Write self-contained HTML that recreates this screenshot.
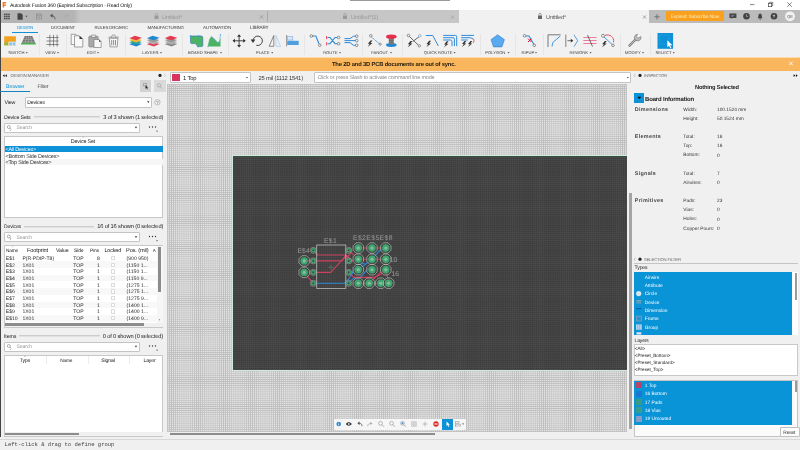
<!DOCTYPE html>
<html lang="en"><head><meta charset="utf-8"><title>Autodesk Fusion 360</title><style>
html,body{margin:0;padding:0}
body{width:800px;height:450px;overflow:hidden;position:relative;background:#f0f0f0;font-family:"Liberation Sans",sans-serif}
#app{position:absolute;left:0;top:0;width:800px;height:450px;overflow:hidden;will-change:transform}
#app>div,#app>svg{position:absolute}
#app>svg{left:0;top:0;pointer-events:none}
.t{white-space:nowrap;line-height:1;text-rendering:geometricPrecision}
.b{font-weight:700}
.m{font-family:"Liberation Mono",monospace}
</style></head><body><div id="app">
<div style="left:0px;top:0px;width:800px;height:10px;background:#ffffff;"></div>
<div style="left:350px;top:0px;width:100px;height:0.9px;background:#9a9a9a;"></div>
<svg width="800" height="450" viewBox="0 0 800 450"><path d="M2.6 2h3.6v1.5h-2v1h1.7v1.4h-1.7v1.6h-1.6z" fill="#f47b20"/></svg>
<div class="t" style="left:10.00px;top:4px;font-size:5.15px;color:#111;letter-spacing:-0.137px;">Autodesk Fusion 360 (Expired Subscription - Read Only)</div>
<svg width="800" height="450" viewBox="0 0 800 450"><g stroke="#333" stroke-width="0.6" fill="none"><path d="M750 4.600h4.400"/><rect x="768.300" y="3.300" width="3.400" height="3.400"/><path d="M769.300 3.300v-1h3.400v3.400h-1"/><path d="M787.300 2.300l4.500 4.500M791.800 2.300l-4.500 4.500"/></g></svg>
<div style="left:0px;top:10px;width:800px;height:12.6px;background:#c6c6c6;"></div>
<div style="left:0px;top:10px;width:80px;height:12.6px;background:linear-gradient(90deg,#b4b4b4,#b4b4b4 92%,#c6c6c6);"></div>
<div style="left:649px;top:10px;width:151px;height:12.6px;background:#bbbbbb;"></div>
<div style="left:459px;top:10.4px;width:190px;height:12.3px;background:#f1f1f1;"></div>
<div style="left:267px;top:11px;width:0.6px;height:11px;background:#aaa;"></div>
<div class="t" style="left:162.00px;top:16px;font-size:5.61px;color:#9a9a9a;letter-spacing:-0.134px;">Untitled*</div>
<div class="t" style="left:351.00px;top:16px;font-size:5.72px;color:#9a9a9a;letter-spacing:-0.134px;">Untitled*(1)</div>
<div class="t" style="left:546.00px;top:16px;font-size:5.61px;color:#555;letter-spacing:-0.134px;">Untitled*</div>
<svg width="800" height="450" viewBox="0 0 800 450"><rect x="154.5" y="15.6" width="4" height="3.4" rx="0.5" fill="#9a9a9a"/><path d="M155.4 15.6v-1.2a1.1 1.1 0 0 1 2.2 0v1.2" stroke="#9a9a9a" stroke-width="0.6" fill="none"/><rect x="343" y="15.6" width="4" height="3.4" rx="0.5" fill="#9a9a9a"/><path d="M343.9 15.6v-1.2a1.1 1.1 0 0 1 2.2 0v1.2" stroke="#9a9a9a" stroke-width="0.6" fill="none"/><rect x="538" y="15.6" width="4" height="3.4" rx="0.5" fill="#666"/><path d="M538.9 15.6v-1.2a1.1 1.1 0 0 1 2.2 0v1.2" stroke="#666" stroke-width="0.6" fill="none"/></svg>
<svg width="800" height="450" viewBox="0 0 800 450"><path d="M259.9 15.4l3.2 3.2M263.1 15.4l-3.2 3.2" stroke="#8a8a8a" stroke-width="0.6" fill="none"/><path d="M450.9 15.4l3.2 3.2M454.1 15.4l-3.2 3.2" stroke="#999" stroke-width="0.6" fill="none"/><path d="M642.9 15.4l3.2 3.2M646.1 15.4l-3.2 3.2" stroke="#777" stroke-width="0.6" fill="none"/></svg>
<svg width="800" height="450" viewBox="0 0 800 450"><path d="M654.300 16.800h5.400M657 14.100v5.400" stroke="#6e6e6e" stroke-width="0.9"/></svg>
<svg width="800" height="450" viewBox="0 0 800 450"><g fill="#444"><rect x="4.0" y="13.6" width="1.5" height="1.5"/><rect x="4.0" y="15.7" width="1.5" height="1.5"/><rect x="4.0" y="17.8" width="1.5" height="1.5"/><rect x="6.1" y="13.6" width="1.5" height="1.5"/><rect x="6.1" y="15.7" width="1.5" height="1.5"/><rect x="6.1" y="17.8" width="1.5" height="1.5"/><rect x="8.2" y="13.6" width="1.5" height="1.5"/><rect x="8.2" y="15.7" width="1.5" height="1.5"/><rect x="8.2" y="17.8" width="1.5" height="1.5"/><path d="M17.5 13.2h3.6l1.6 1.6v5h-5.2z"/><path d="M25.3 15.8h2.2l-1.1 1.4z"/></g><g fill="none" stroke="#8a8a8a" stroke-width="0.7"><rect x="36.5" y="14" width="5" height="5"/><path d="M36.5 15.8h5M38 17.2h2"/></g><path d="M55 19.3c0-2.6-1.2-3.6-3.6-3.6" stroke="#555" stroke-width="0.9" fill="none"/><path d="M52.6 13.6l-2.6 2.1 2.6 2.1z" fill="#555"/><path d="M63.5 17.8c.6-1.7 2-2.4 3.8-2.3" stroke="#aaa" stroke-width="0.9" fill="none"/><path d="M66.8 13.9l2.3 1.7-2.3 1.7z" fill="#aaa"/></svg>
<div style="left:666px;top:11.2px;width:58px;height:10px;background:#f9a11f;border-radius:1px"></div>
<div class="t" style="left:671.00px;top:16px;font-size:4.77px;color:#ffedb8;letter-spacing:-0.132px;">Expired: Subscribe Now</div>
<svg width="800" height="450" viewBox="0 0 800 450"><g fill="#444"><path d="M729.400 13.600h7v4.300h-3.800l-1.200 1.200v-1.200h-2z"/><circle cx="746.500" cy="16.200" r="3.300"/><path d="M757.6 18.3c.9-.8.7-2 .9-3 .2-1.2.8-1.9 1.6-1.9s1.4.7 1.6 1.900c.2 1 0 2.200.9 3z"/><circle cx="760.1" cy="19" r="0.7"/><circle cx="774" cy="16.200" r="3.300"/></g><path d="M746.5 14.400v2h1.500" stroke="#ccc" stroke-width="0.6" fill="none"/><path d="M731.200 15.500h3.200M731.200 16.600h2" stroke="#ccc" stroke-width="0.4"/><circle cx="790" cy="16.300" r="4.900" fill="#f2f2f2"/></svg>
<div class="t b" style="left:772.60px;top:15px;font-size:4.6px;color:#ddd;">?</div>
<div class="t" style="left:787.04px;top:15px;font-size:4.1px;color:#444;">QE</div>
<div style="left:0px;top:22.6px;width:800px;height:34px;background:#f1f1f1;"></div>
<div class="t" style="left:17.00px;top:26px;font-size:4.42px;color:#0d92d8;letter-spacing:-0.158px;">DESIGN</div>
<div class="t" style="left:51.00px;top:26px;font-size:4.4px;color:#3a3a3a;letter-spacing:-0.178px;">DOCUMENT</div>
<div class="t" style="left:94.50px;top:26px;font-size:4.35px;color:#3a3a3a;letter-spacing:-0.156px;">RULES DRC/ERC</div>
<div class="t" style="left:147.50px;top:26px;font-size:4.43px;color:#3a3a3a;letter-spacing:-0.165px;">MANUFACTURING</div>
<div class="t" style="left:203.00px;top:26px;font-size:4.52px;color:#3a3a3a;letter-spacing:-0.172px;">AUTOMATION</div>
<div class="t" style="left:250.00px;top:26px;font-size:4.6px;color:#3a3a3a;letter-spacing:-0.157px;">LIBRARY</div>
<div style="left:12px;top:32px;width:25.5px;height:0.8px;background:#0d92d8;"></div>
<div class="t" style="left:8.22px;top:51px;font-size:4.15px;color:#3c3c3c;">SWITCH</div>
<svg width="800" height="450" viewBox="0 0 800 450"><path d="M25.75 52.2h2l-1 1.3z" fill="#333"/></svg>
<div class="t" style="left:45.20px;top:51px;font-size:4.15px;color:#3c3c3c;">VIEW</div>
<svg width="800" height="450" viewBox="0 0 800 450"><path d="M57.00 52.2h2l-1 1.3z" fill="#333"/></svg>
<div class="t" style="left:86.87px;top:51px;font-size:4.15px;color:#3c3c3c;">EDIT</div>
<svg width="800" height="450" viewBox="0 0 800 450"><path d="M97.00 52.2h2l-1 1.3z" fill="#333"/></svg>
<div class="t" style="left:142.37px;top:51px;font-size:4.15px;color:#3c3c3c;">LAYERS</div>
<svg width="800" height="450" viewBox="0 0 800 450"><path d="M160.00 52.2h2l-1 1.3z" fill="#333"/></svg>
<div class="t" style="left:188.01px;top:51px;font-size:4.15px;color:#3c3c3c;">BOARD SHAPE</div>
<svg width="800" height="450" viewBox="0 0 800 450"><path d="M220.00 52.2h2l-1 1.3z" fill="#333"/></svg>
<div class="t" style="left:256.00px;top:51px;font-size:4.15px;color:#3c3c3c;">PLACE</div>
<svg width="800" height="450" viewBox="0 0 800 450"><path d="M271.20 52.2h2l-1 1.3z" fill="#333"/></svg>
<div class="t" style="left:323.14px;top:51px;font-size:4.15px;color:#3c3c3c;">ROUTE</div>
<svg width="800" height="450" viewBox="0 0 800 450"><path d="M339.00 52.2h2l-1 1.3z" fill="#333"/></svg>
<div class="t" style="left:371.18px;top:51px;font-size:4.15px;color:#3c3c3c;">FANOUT</div>
<svg width="800" height="450" viewBox="0 0 800 450"><path d="M390.00 52.2h2l-1 1.3z" fill="#333"/></svg>
<div class="t" style="left:423.79px;top:51px;font-size:4.15px;color:#3c3c3c;">QUICK ROUTE</div>
<svg width="800" height="450" viewBox="0 0 800 450"><path d="M453.60 52.2h2l-1 1.3z" fill="#333"/></svg>
<div class="t" style="left:485.19px;top:51px;font-size:4.15px;color:#3c3c3c;">POLYGON</div>
<svg width="800" height="450" viewBox="0 0 800 450"><path d="M507.50 52.2h2l-1 1.3z" fill="#333"/></svg>
<div class="t" style="left:521.56px;top:51px;font-size:4.15px;color:#3c3c3c;">RIPUP</div>
<svg width="800" height="450" viewBox="0 0 800 450"><path d="M535.00 52.2h2l-1 1.3z" fill="#333"/></svg>
<div class="t" style="left:569.41px;top:51px;font-size:4.15px;color:#3c3c3c;">REWORK</div>
<svg width="800" height="450" viewBox="0 0 800 450"><path d="M589.60 52.2h2l-1 1.3z" fill="#333"/></svg>
<div class="t" style="left:624.73px;top:51px;font-size:4.15px;color:#3c3c3c;">MODIFY</div>
<svg width="800" height="450" viewBox="0 0 800 450"><path d="M642.00 52.2h2l-1 1.3z" fill="#333"/></svg>
<div class="t" style="left:655.53px;top:51px;font-size:4.15px;color:#3c3c3c;">SELECT</div>
<svg width="800" height="450" viewBox="0 0 800 450"><path d="M672.75 52.2h2l-1 1.3z" fill="#333"/></svg>
<div style="left:38.5px;top:34px;width:0.5px;height:21px;background:#e6e6e6;"></div>
<div style="left:66px;top:34px;width:0.5px;height:21px;background:#e6e6e6;"></div>
<div style="left:124.5px;top:34px;width:0.5px;height:21px;background:#e6e6e6;"></div>
<div style="left:182px;top:34px;width:0.5px;height:21px;background:#e6e6e6;"></div>
<div style="left:227.5px;top:34px;width:0.5px;height:21px;background:#e6e6e6;"></div>
<div style="left:304px;top:34px;width:0.5px;height:21px;background:#e6e6e6;"></div>
<div style="left:362px;top:34px;width:0.5px;height:21px;background:#e6e6e6;"></div>
<div style="left:402px;top:34px;width:0.5px;height:21px;background:#e6e6e6;"></div>
<div style="left:479.5px;top:34px;width:0.5px;height:21px;background:#e6e6e6;"></div>
<div style="left:515px;top:34px;width:0.5px;height:21px;background:#e6e6e6;"></div>
<div style="left:542.5px;top:34px;width:0.5px;height:21px;background:#e6e6e6;"></div>
<div style="left:619.5px;top:34px;width:0.5px;height:21px;background:#e6e6e6;"></div>
<div style="left:650px;top:34px;width:0.5px;height:21px;background:#e6e6e6;"></div>
<div style="left:0px;top:56.5px;width:800px;height:14px;background:#fab65c;"></div>
<div style="left:0px;top:56.5px;width:800px;height:0.8px;background:#fcd9a8;"></div>
<div class="t b" style="left:332.00px;top:63px;font-size:5.81px;color:#2a2010;letter-spacing:-0.168px;">The 2D and 3D PCB documents are out of sync.</div>
<svg width="800" height="450" viewBox="0 0 800 450"><path d="M789.3 61.699999999999996l3.4 3.4M792.7 61.699999999999996l-3.4 3.4" stroke="#fff" stroke-width="0.9" fill="none"/></svg>
<div style="left:0px;top:70.5px;width:167px;height:380px;background:#f0f0f0;"></div>
<div style="left:0px;top:0px;width:1.1px;height:450px;background:#444;"></div>
<div class="t" style="left:10.50px;top:74px;font-size:4.45px;color:#666;letter-spacing:-0.164px;">DESIGN MANAGER</div>
<svg width="800" height="450" viewBox="0 0 800 450"><path d="M4.600 74.300l-1.800 1.400 1.800 1.400zM6.900 74.300l-1.800 1.400 1.800 1.400z" fill="#111"/><circle cx="160" cy="75.400" r="1.600" fill="#222"/><path d="M164.300 73.700l1 1.700-1 1.700" stroke="#aaa" stroke-width="0.5" fill="none"/></svg>
<div class="t" style="left:6.00px;top:85px;font-size:5.34px;color:#0d92d8;letter-spacing:-0.155px;">Browser</div>
<div class="t" style="left:37.50px;top:85px;font-size:5.15px;color:#444;letter-spacing:-0.107px;">Filter</div>
<div style="left:0px;top:90.6px;width:30px;height:1.1px;background:#1583c4;"></div>
<div style="left:139.5px;top:80px;width:11.8px;height:12px;background:#d2d2d2;"></div>
<div style="left:154px;top:80px;width:11.5px;height:12px;background:#dadada;"></div>
<svg width="800" height="450" viewBox="0 0 800 450"><path d="M143.500 83.500h3v2.500h-3z" fill="none" stroke="#666" stroke-width="0.4"/><path d="M145.500 85.200l0 3.600.9-.9.700 1.500.6-.3-.7-1.400h1.200z" fill="#222"/><circle cx="159" cy="85.300" r="1.700" fill="none" stroke="#999" stroke-width="0.6"/><path d="M160.200 86.600l1.800 1.900" stroke="#999" stroke-width="0.7"/></svg>
<div class="t" style="left:4.50px;top:101px;font-size:5.32px;color:#222;letter-spacing:-0.159px;">View</div>
<div style="left:25px;top:97px;width:127px;height:10.5px;background:#fff;box-sizing:border-box;border:0.6px solid #c4c4c4;border-radius:1px"></div>
<div class="t" style="left:27.20px;top:101px;font-size:5.22px;color:#222;letter-spacing:-0.152px;">Devices</div>
<svg width="800" height="450" viewBox="0 0 800 450"><path d="M147.100 101.300h2.400l-1.200 1.600z" fill="#333"/><circle cx="157.400" cy="102.200" r="2.700" fill="none" stroke="#888" stroke-width="0.5"/></svg>
<div class="t" style="left:156.23px;top:101px;font-size:4.2px;color:#666;">?</div>
<div class="t" style="left:4.00px;top:116px;font-size:5.27px;color:#222;letter-spacing:-0.147px;">Device Sets</div>
<div class="t" style="left:103.20px;top:116px;font-size:5.69px;color:#222;letter-spacing:-0.143px;">3 of 3 shown (1 selected)</div>
<div style="left:34px;top:116.4px;width:66px;height:2px;background:#e2e2e2;box-sizing:border-box;border-top:0.5px solid #cdcdcd"></div>
<div style="left:4px;top:122.5px;width:135.5px;height:10px;background:#fff;box-sizing:border-box;border:0.6px solid #c4c4c4;border-radius:1px"></div>
<svg width="800" height="450" viewBox="0 0 800 450"><circle cx="8.800" cy="127.0" r="1.500" fill="none" stroke="#666" stroke-width="0.500"/><path d="M9.900 128.1l1.400 1.400" stroke="#666" stroke-width="0.600"/><path d="M9.600 129.9h1.400l-.7.900z" fill="#666"/><path d="M134.800 126.8h2.400l-1.200 1.600z" fill="#333"/><circle cx="149.5" cy="127.0" r="0.650" fill="#333"/><circle cx="152.5" cy="127.0" r="0.650" fill="#333"/><circle cx="155.5" cy="127.0" r="0.650" fill="#333"/><path d="M156.200 130.8h1.700l-.85 1.100z" fill="#333"/></svg>
<div class="t" style="left:16.50px;top:126px;font-size:5.18px;color:#9a9a9a;letter-spacing:-0.152px;">Search</div>
<div style="left:4px;top:135.5px;width:159.2px;height:82.5px;background:#fff;box-sizing:border-box;border:0.6px solid #c8c8c8"></div>
<div class="t" style="left:70.75px;top:140px;font-size:5.37px;color:#222;letter-spacing:-0.147px;">Device Set</div>
<svg width="800" height="450" viewBox="0 0 800 450"><path d="M82 137.600l1-0.800 1 .8" stroke="#888" stroke-width="0.4" fill="none"/></svg>
<div style="left:4.6px;top:146px;width:158px;height:6.3px;background:#0d92d8;"></div>
<div class="t" style="left:5.50px;top:148px;font-size:5.29px;color:#fff;letter-spacing:-0.142px;">&lt;All Devices&gt;</div>
<div class="t" style="left:5.50px;top:155px;font-size:5.48px;color:#333;letter-spacing:-0.156px;">&lt;Bottom Side Devices&gt;</div>
<div style="left:4.6px;top:159.2px;width:158px;height:6.3px;background:#f6f6f6;"></div>
<div class="t" style="left:5.50px;top:161px;font-size:5.48px;color:#333;letter-spacing:-0.152px;">&lt;Top Side Devices&gt;</div>
<div class="t" style="left:4.00px;top:225px;font-size:5.07px;color:#222;letter-spacing:-0.148px;">Devices</div>
<div class="t" style="left:97.20px;top:225px;font-size:5.69px;color:#222;letter-spacing:-0.145px;">16 of 16 shown (0 selected)</div>
<div style="left:24px;top:225.5px;width:70px;height:2px;background:#e2e2e2;box-sizing:border-box;border-top:0.5px solid #cdcdcd"></div>
<div style="left:4px;top:232px;width:135.5px;height:10px;background:#fff;box-sizing:border-box;border:0.6px solid #c4c4c4;border-radius:1px"></div>
<svg width="800" height="450" viewBox="0 0 800 450"><circle cx="8.800" cy="236.5" r="1.500" fill="none" stroke="#666" stroke-width="0.500"/><path d="M9.900 237.6l1.400 1.400" stroke="#666" stroke-width="0.600"/><path d="M9.600 239.4h1.400l-.7.900z" fill="#666"/><path d="M134.800 236.3h2.400l-1.200 1.600z" fill="#333"/><circle cx="149.5" cy="236.5" r="0.650" fill="#333"/><circle cx="152.5" cy="236.5" r="0.650" fill="#333"/><circle cx="155.5" cy="236.5" r="0.650" fill="#333"/><path d="M156.200 240.3h1.700l-.85 1.100z" fill="#333"/></svg>
<div class="t" style="left:16.50px;top:236px;font-size:5.18px;color:#9a9a9a;letter-spacing:-0.152px;">Search</div>
<div style="left:4px;top:245px;width:159.2px;height:82.5px;background:#fff;box-sizing:border-box;border:0.6px solid #c8c8c8"></div>
<svg width="800" height="450" viewBox="0 0 800 450"><path d="M11.500 246.800l1-0.800 1 .8" stroke="#888" stroke-width="0.4" fill="none"/></svg>
<div class="t" style="left:6.00px;top:250px;font-size:4.77px;color:#222;letter-spacing:-0.181px;">Name</div>
<div class="t" style="left:27.00px;top:249px;font-size:5.64px;color:#222;letter-spacing:-0.140px;">Footprint</div>
<div class="t" style="left:56.00px;top:249px;font-size:5.33px;color:#222;letter-spacing:-0.147px;">Value</div>
<div class="t" style="left:74.00px;top:249px;font-size:5.04px;color:#222;letter-spacing:-0.147px;">Side</div>
<div class="t" style="left:90.00px;top:250px;font-size:4.91px;color:#222;letter-spacing:-0.138px;">Pins</div>
<div class="t" style="left:104.50px;top:249px;font-size:5.43px;color:#222;letter-spacing:-0.168px;">Locked</div>
<div class="t" style="left:126.00px;top:249px;font-size:5.65px;color:#222;letter-spacing:-0.136px;">Pos. (mil)</div>
<div class="t" style="left:152.80px;top:249px;font-size:4.5px;color:#222;">A</div>
<div class="t" style="left:5.80px;top:257px;font-size:5.1px;color:#2a2a2a;">E$1</div>
<div class="t" style="left:22.40px;top:257px;font-size:5.1px;color:#2a2a2a;">P(R-PDIP-T8)</div>
<div class="t" style="left:73.20px;top:257px;font-size:5.1px;color:#2a2a2a;">TOP</div>
<div class="t" style="left:96.96px;top:257px;font-size:5.1px;color:#2a2a2a;">8</div>
<div style="left:111px;top:255.8px;width:4.4px;height:4.4px;background:#fdfdfd;box-sizing:border-box;border:0.4px solid #dcdcdc;border-radius:0.6px"></div>
<div class="t" style="left:126.60px;top:257px;font-size:5.1px;color:#2a2a2a;">(900 950)</div>
<div style="left:4.6px;top:261.4px;width:152px;height:6.6px;background:#f8f8f8;"></div>
<div class="t" style="left:5.80px;top:264px;font-size:5.1px;color:#2a2a2a;">E$2</div>
<div class="t" style="left:22.40px;top:264px;font-size:5.1px;color:#2a2a2a;">1X01</div>
<div class="t" style="left:73.20px;top:264px;font-size:5.1px;color:#2a2a2a;">TOP</div>
<div class="t" style="left:96.96px;top:264px;font-size:5.1px;color:#2a2a2a;">1</div>
<div style="left:111px;top:262.5px;width:4.4px;height:4.4px;background:#fdfdfd;box-sizing:border-box;border:0.4px solid #dcdcdc;border-radius:0.6px"></div>
<div class="t" style="left:126.60px;top:264px;font-size:5.1px;color:#2a2a2a;">(1150 1...</div>
<div class="t" style="left:5.80px;top:270px;font-size:5.1px;color:#2a2a2a;">E$3</div>
<div class="t" style="left:22.40px;top:270px;font-size:5.1px;color:#2a2a2a;">1X01</div>
<div class="t" style="left:73.20px;top:270px;font-size:5.1px;color:#2a2a2a;">TOP</div>
<div class="t" style="left:96.96px;top:270px;font-size:5.1px;color:#2a2a2a;">1</div>
<div style="left:111px;top:269.2px;width:4.4px;height:4.4px;background:#fdfdfd;box-sizing:border-box;border:0.4px solid #dcdcdc;border-radius:0.6px"></div>
<div class="t" style="left:126.60px;top:270px;font-size:5.1px;color:#2a2a2a;">(1150 1...</div>
<div style="left:4.6px;top:274.8px;width:152px;height:6.6px;background:#f8f8f8;"></div>
<div class="t" style="left:5.80px;top:277px;font-size:5.1px;color:#2a2a2a;">E$4</div>
<div class="t" style="left:22.40px;top:277px;font-size:5.1px;color:#2a2a2a;">1X01</div>
<div class="t" style="left:73.20px;top:277px;font-size:5.1px;color:#2a2a2a;">TOP</div>
<div class="t" style="left:96.96px;top:277px;font-size:5.1px;color:#2a2a2a;">1</div>
<div style="left:111px;top:275.9px;width:4.4px;height:4.4px;background:#fdfdfd;box-sizing:border-box;border:0.4px solid #dcdcdc;border-radius:0.6px"></div>
<div class="t" style="left:126.60px;top:277px;font-size:5.1px;color:#2a2a2a;">(1150 9...</div>
<div class="t" style="left:5.80px;top:284px;font-size:5.1px;color:#2a2a2a;">E$5</div>
<div class="t" style="left:22.40px;top:284px;font-size:5.1px;color:#2a2a2a;">1X01</div>
<div class="t" style="left:73.20px;top:284px;font-size:5.1px;color:#2a2a2a;">TOP</div>
<div class="t" style="left:96.96px;top:284px;font-size:5.1px;color:#2a2a2a;">1</div>
<div style="left:111px;top:282.6px;width:4.4px;height:4.4px;background:#fdfdfd;box-sizing:border-box;border:0.4px solid #dcdcdc;border-radius:0.6px"></div>
<div class="t" style="left:126.60px;top:284px;font-size:5.1px;color:#2a2a2a;">(1275 1...</div>
<div style="left:4.6px;top:288.2px;width:152px;height:6.6px;background:#f8f8f8;"></div>
<div class="t" style="left:5.80px;top:290px;font-size:5.1px;color:#2a2a2a;">E$6</div>
<div class="t" style="left:22.40px;top:290px;font-size:5.1px;color:#2a2a2a;">1X01</div>
<div class="t" style="left:73.20px;top:290px;font-size:5.1px;color:#2a2a2a;">TOP</div>
<div class="t" style="left:96.96px;top:290px;font-size:5.1px;color:#2a2a2a;">1</div>
<div style="left:111px;top:289.3px;width:4.4px;height:4.4px;background:#fdfdfd;box-sizing:border-box;border:0.4px solid #dcdcdc;border-radius:0.6px"></div>
<div class="t" style="left:126.60px;top:290px;font-size:5.1px;color:#2a2a2a;">(1275 1...</div>
<div class="t" style="left:5.80px;top:297px;font-size:5.1px;color:#2a2a2a;">E$7</div>
<div class="t" style="left:22.40px;top:297px;font-size:5.1px;color:#2a2a2a;">1X01</div>
<div class="t" style="left:73.20px;top:297px;font-size:5.1px;color:#2a2a2a;">TOP</div>
<div class="t" style="left:96.96px;top:297px;font-size:5.1px;color:#2a2a2a;">1</div>
<div style="left:111px;top:296px;width:4.4px;height:4.4px;background:#fdfdfd;box-sizing:border-box;border:0.4px solid #dcdcdc;border-radius:0.6px"></div>
<div class="t" style="left:126.60px;top:297px;font-size:5.1px;color:#2a2a2a;">(1275 9...</div>
<div style="left:4.6px;top:301.6px;width:152px;height:6.6px;background:#f8f8f8;"></div>
<div class="t" style="left:5.80px;top:304px;font-size:5.1px;color:#2a2a2a;">E$8</div>
<div class="t" style="left:22.40px;top:304px;font-size:5.1px;color:#2a2a2a;">1X01</div>
<div class="t" style="left:73.20px;top:304px;font-size:5.1px;color:#2a2a2a;">TOP</div>
<div class="t" style="left:96.96px;top:304px;font-size:5.1px;color:#2a2a2a;">1</div>
<div style="left:111px;top:302.7px;width:4.4px;height:4.4px;background:#fdfdfd;box-sizing:border-box;border:0.4px solid #dcdcdc;border-radius:0.6px"></div>
<div class="t" style="left:126.60px;top:304px;font-size:5.1px;color:#2a2a2a;">(1400 1...</div>
<div class="t" style="left:5.80px;top:310px;font-size:5.1px;color:#2a2a2a;">E$9</div>
<div class="t" style="left:22.40px;top:310px;font-size:5.1px;color:#2a2a2a;">1X01</div>
<div class="t" style="left:73.20px;top:310px;font-size:5.1px;color:#2a2a2a;">TOP</div>
<div class="t" style="left:96.96px;top:310px;font-size:5.1px;color:#2a2a2a;">1</div>
<div style="left:111px;top:309.4px;width:4.4px;height:4.4px;background:#fdfdfd;box-sizing:border-box;border:0.4px solid #dcdcdc;border-radius:0.6px"></div>
<div class="t" style="left:126.60px;top:310px;font-size:5.1px;color:#2a2a2a;">(1400 1...</div>
<div style="left:4.6px;top:315px;width:152px;height:6.6px;background:#f8f8f8;"></div>
<div class="t" style="left:5.80px;top:317px;font-size:5.1px;color:#2a2a2a;">E$10</div>
<div class="t" style="left:22.40px;top:317px;font-size:5.1px;color:#2a2a2a;">1X01</div>
<div class="t" style="left:73.20px;top:317px;font-size:5.1px;color:#2a2a2a;">TOP</div>
<div class="t" style="left:96.96px;top:317px;font-size:5.1px;color:#2a2a2a;">1</div>
<div style="left:111px;top:316.1px;width:4.4px;height:4.4px;background:#fdfdfd;box-sizing:border-box;border:0.4px solid #dcdcdc;border-radius:0.6px"></div>
<div class="t" style="left:126.60px;top:317px;font-size:5.1px;color:#2a2a2a;">(1400 9...</div>
<div style="left:157px;top:245.6px;width:5.6px;height:77px;background:#f6f6f6;"></div>
<div style="left:158.4px;top:246.5px;width:2.2px;height:45.5px;background:#8c8c8c;"></div>
<div style="left:4.6px;top:322.6px;width:158px;height:4.3px;background:#f0f0f0;"></div>
<div style="left:4.7px;top:323.4px;width:139.6px;height:2.7px;background:#8c8c8c;"></div>
<svg width="800" height="450" viewBox="0 0 800 450"><path d="M158.700 319.500l.8 1 .8-1z" fill="#444"/></svg>
<div class="t" style="left:4.00px;top:335px;font-size:5.33px;color:#222;letter-spacing:-0.146px;">Items</div>
<div class="t" style="left:102.70px;top:335px;font-size:5.73px;color:#222;letter-spacing:-0.141px;">0 of 0 shown (0 selected)</div>
<div style="left:19px;top:335.4px;width:80.5px;height:2px;background:#e2e2e2;box-sizing:border-box;border-top:0.5px solid #cdcdcd"></div>
<div style="left:4px;top:341.5px;width:135.5px;height:10px;background:#fff;box-sizing:border-box;border:0.6px solid #c4c4c4;border-radius:1px"></div>
<svg width="800" height="450" viewBox="0 0 800 450"><circle cx="8.800" cy="346.0" r="1.500" fill="none" stroke="#666" stroke-width="0.500"/><path d="M9.900 347.1l1.400 1.400" stroke="#666" stroke-width="0.600"/><path d="M9.600 348.9h1.400l-.7.900z" fill="#666"/><path d="M134.800 345.8h2.400l-1.200 1.600z" fill="#333"/><circle cx="149.5" cy="346.0" r="0.650" fill="#333"/><circle cx="152.5" cy="346.0" r="0.650" fill="#333"/><circle cx="155.5" cy="346.0" r="0.650" fill="#333"/><path d="M156.200 349.8h1.700l-.85 1.100z" fill="#333"/></svg>
<div class="t" style="left:16.50px;top:345px;font-size:5.18px;color:#9a9a9a;letter-spacing:-0.152px;">Search</div>
<div style="left:4px;top:355px;width:159.2px;height:82px;background:#fff;box-sizing:border-box;border:0.6px solid #c8c8c8"></div>
<svg width="800" height="450" viewBox="0 0 800 450"><path d="M24 356.800l1-0.800 1 .8" stroke="#888" stroke-width="0.4" fill="none"/></svg>
<div class="t" style="left:19.75px;top:359px;font-size:5.13px;color:#222;letter-spacing:-0.156px;">Type</div>
<div class="t" style="left:60.20px;top:360px;font-size:4.77px;color:#222;letter-spacing:-0.181px;">Name</div>
<div class="t" style="left:101.25px;top:359px;font-size:5.15px;color:#222;letter-spacing:-0.136px;">Signal</div>
<div class="t" style="left:143.50px;top:359px;font-size:5.09px;color:#222;letter-spacing:-0.147px;">Layer</div>
<div style="left:45.5px;top:356px;width:0.5px;height:8px;background:#ececec;"></div>
<div style="left:87.5px;top:356px;width:0.5px;height:8px;background:#ececec;"></div>
<div style="left:129px;top:356px;width:0.5px;height:8px;background:#ececec;"></div>
<div style="left:4.6px;top:431.8px;width:158px;height:4.4px;background:#f0f0f0;"></div>
<div style="left:4.6px;top:432.6px;width:74px;height:2.6px;background:#8c8c8c;"></div>
<div style="left:0px;top:437px;width:800px;height:13px;background:#f0f0f0;"></div>
<div style="left:0px;top:438.8px;width:800px;height:0.5px;background:#d8d8d8;"></div>
<div class="t m" style="left:4.60px;top:442px;font-size:5.55px;color:#444;">Left-click &amp; drag to define group</div>
<div style="left:170px;top:72px;width:80.5px;height:10.5px;background:#fff;box-sizing:border-box;border:0.6px solid #c4c4c4;border-radius:1px"></div>
<div style="left:172px;top:73.8px;width:8px;height:7.5px;background:#d9345c;"></div>
<div class="t" style="left:183.00px;top:77px;font-size:5.89px;color:#222;letter-spacing:-0.161px;">1 Top</div>
<svg width="800" height="450" viewBox="0 0 800 450"><path d="M246 77h2l-1 1.300z" fill="#333"/></svg>
<div class="t" style="left:258.50px;top:77px;font-size:5.76px;color:#333;letter-spacing:-0.149px;">25 mil (1112 1541)</div>
<div style="left:314px;top:72px;width:316.5px;height:11px;background:#fff;box-sizing:border-box;border:0.6px solid #c4c4c4;border-radius:1px"></div>
<div class="t" style="left:317.50px;top:76px;font-size:5.41px;color:#8a8a8a;letter-spacing:-0.144px;">Click or press Slash to activate command line mode</div>
<svg width="800" height="450" viewBox="0 0 800 450"><path d="M626.800 77h2l-1 1.300z" fill="#333"/></svg>
<div style="left:167px;top:84.3px;width:459.7px;height:347.7px;background-color:#e3e3e3;background-image:linear-gradient(90deg,#bebebe 0,#bebebe 0.6px,transparent 0.6px),linear-gradient(180deg,#bebebe 0,#bebebe 0.6px,transparent 0.6px);background-size:2.08333px 2.08333px;background-position:0px 0px"></div>
<div style="left:232.2px;top:155.2px;width:394.5px;height:215.6px;background:#cfe9df;"></div>
<div style="left:233px;top:156px;width:393.7px;height:214px;background-color:#3c3c3c;background-image:linear-gradient(90deg,#494949 0,#494949 0.6px,transparent 0.6px),linear-gradient(180deg,#494949 0,#494949 0.6px,transparent 0.6px);background-size:2.08333px 2.08333px;background-position:0.66656px 1.21655px"></div>
<div style="left:233px;top:156px;width:393.7px;height:1px;background:#34503f;"></div>
<div style="left:627.5px;top:84.5px;width:4.5px;height:352.5px;background:#f0f0f0;"></div>
<div style="left:629.3px;top:193.3px;width:2.4px;height:235.5px;background:#a4a4a4;"></div>
<div style="left:167px;top:432px;width:460.5px;height:5px;background:#f0f0f0;"></div>
<div style="left:169.5px;top:432.6px;width:265.5px;height:2.6px;background:#8c8c8c;"></div>
<svg width="800" height="450" viewBox="0 0 800 450"><g fill="none" stroke-width="1.1" stroke-linecap="round" stroke-linejoin="round"><path d="M313.3 250.3l4.500 4.700h28l3 3 4 3" stroke="#cc4060"/><path d="M304.200 260.9H342l4-5h2.700l3-4.300" stroke="#cc4060"/><path d="M313.3 272.4h17.500l14-15.500h4" stroke="#cc4060"/><path d="M304.200 272.4l4 5 5.100 6" stroke="#cc4060"/><path d="M313.3 283.3h31l4.400-4.300 3-4.500 3-6 3.600-4 6-1" stroke="#2e86d6"/><path d="M348.7 283.3l4-4.500h6l5-5 4.500-5.500" stroke="#2e86d6"/><path d="M348.7 250.3l4.500 4 5.100 5h27.500" stroke="#cc4060"/><path d="M348.7 272.4l5 5h20l6-2.500 8-5" stroke="#cc4060"/><path d="M358.300 269.700l13.700-10.500 7-8 6.800-3.200" stroke="#2e86d6"/><path d="M358.300 248h27.500M385.800 259.200v10.500l3 13.500M369.200 283.200l11.600-11 5-2.500M358.300 283.200h30" stroke="#cc4060"/></g><rect x="316.700" y="245" width="29.100" height="43.400" fill="none" stroke="#bcbcbc" stroke-width="0.8"/><path d="M328 267.300h6M331 264.300v6" stroke="#8a8a8a" stroke-width="0.4"/><circle cx="313.3" cy="250.3" r="3.0" fill="#3a3a3a" fill-opacity="0.5" stroke="#b4c8bc" stroke-width="0.5"/><circle cx="313.3" cy="250.3" r="2.3" fill="#3fb577" fill-opacity="0.9"/><circle cx="313.3" cy="250.3" r="1.03" fill="#3a4a40"/><circle cx="348.7" cy="250.3" r="3.0" fill="#3a3a3a" fill-opacity="0.5" stroke="#b4c8bc" stroke-width="0.5"/><circle cx="348.7" cy="250.3" r="2.3" fill="#3fb577" fill-opacity="0.9"/><circle cx="348.7" cy="250.3" r="1.03" fill="#3a4a40"/><circle cx="313.3" cy="260.9" r="3.0" fill="#3a3a3a" fill-opacity="0.5" stroke="#b4c8bc" stroke-width="0.5"/><circle cx="313.3" cy="260.9" r="2.3" fill="#3fb577" fill-opacity="0.9"/><circle cx="313.3" cy="260.9" r="1.03" fill="#3a4a40"/><circle cx="348.7" cy="260.9" r="3.0" fill="#3a3a3a" fill-opacity="0.5" stroke="#b4c8bc" stroke-width="0.5"/><circle cx="348.7" cy="260.9" r="2.3" fill="#3fb577" fill-opacity="0.9"/><circle cx="348.7" cy="260.9" r="1.03" fill="#3a4a40"/><circle cx="313.3" cy="272.4" r="3.0" fill="#3a3a3a" fill-opacity="0.5" stroke="#b4c8bc" stroke-width="0.5"/><circle cx="313.3" cy="272.4" r="2.3" fill="#3fb577" fill-opacity="0.9"/><circle cx="313.3" cy="272.4" r="1.03" fill="#3a4a40"/><circle cx="348.7" cy="272.4" r="3.0" fill="#3a3a3a" fill-opacity="0.5" stroke="#b4c8bc" stroke-width="0.5"/><circle cx="348.7" cy="272.4" r="2.3" fill="#3fb577" fill-opacity="0.9"/><circle cx="348.7" cy="272.4" r="1.03" fill="#3a4a40"/><circle cx="313.3" cy="283.3" r="3.0" fill="#3a3a3a" fill-opacity="0.5" stroke="#b4c8bc" stroke-width="0.5"/><circle cx="313.3" cy="283.3" r="2.3" fill="#3fb577" fill-opacity="0.9"/><circle cx="313.3" cy="283.3" r="1.03" fill="#3a4a40"/><circle cx="348.7" cy="283.3" r="3.0" fill="#3a3a3a" fill-opacity="0.5" stroke="#b4c8bc" stroke-width="0.5"/><circle cx="348.7" cy="283.3" r="2.3" fill="#3fb577" fill-opacity="0.9"/><circle cx="348.7" cy="283.3" r="1.03" fill="#3a4a40"/><path d="M302.05 255.70h4.31l3.05 3.05v4.31l-3.05 3.05h-4.31l-3.05 -3.05v-4.31z" fill="#3d4640" fill-opacity="0.55" stroke="#c4cfc8" stroke-width="0.6"/><circle cx="304.2" cy="260.9" r="3.7" fill="#3fb577" fill-opacity="0.86"/><circle cx="304.2" cy="260.9" r="1.55" fill="#9cc8ae" fill-opacity="0.75"/><path d="M302.05 267.20h4.31l3.05 3.05v4.31l-3.05 3.05h-4.31l-3.05 -3.05v-4.31z" fill="#3d4640" fill-opacity="0.55" stroke="#c4cfc8" stroke-width="0.6"/><circle cx="304.2" cy="272.4" r="3.7" fill="#3fb577" fill-opacity="0.86"/><circle cx="304.2" cy="272.4" r="1.55" fill="#9cc8ae" fill-opacity="0.75"/><path d="M356.15 242.80h4.31l3.05 3.05v4.31l-3.05 3.05h-4.31l-3.05 -3.05v-4.31z" fill="#3d4640" fill-opacity="0.55" stroke="#c4cfc8" stroke-width="0.6"/><circle cx="358.3" cy="248" r="3.7" fill="#3fb577" fill-opacity="0.86"/><circle cx="358.3" cy="248" r="1.55" fill="#9cc8ae" fill-opacity="0.75"/><path d="M356.15 254.00h4.31l3.05 3.05v4.31l-3.05 3.05h-4.31l-3.05 -3.05v-4.31z" fill="#3d4640" fill-opacity="0.55" stroke="#c4cfc8" stroke-width="0.6"/><circle cx="358.3" cy="259.2" r="3.7" fill="#3fb577" fill-opacity="0.86"/><circle cx="358.3" cy="259.2" r="1.55" fill="#9cc8ae" fill-opacity="0.75"/><path d="M356.15 264.50h4.31l3.05 3.05v4.31l-3.05 3.05h-4.31l-3.05 -3.05v-4.31z" fill="#3d4640" fill-opacity="0.55" stroke="#c4cfc8" stroke-width="0.6"/><circle cx="358.3" cy="269.7" r="3.7" fill="#3fb577" fill-opacity="0.86"/><circle cx="358.3" cy="269.7" r="1.55" fill="#9cc8ae" fill-opacity="0.75"/><path d="M369.85 242.80h4.31l3.05 3.05v4.31l-3.05 3.05h-4.31l-3.05 -3.05v-4.31z" fill="#3d4640" fill-opacity="0.55" stroke="#c4cfc8" stroke-width="0.6"/><circle cx="372" cy="248" r="3.7" fill="#3fb577" fill-opacity="0.86"/><circle cx="372" cy="248" r="1.55" fill="#9cc8ae" fill-opacity="0.75"/><path d="M369.85 254.00h4.31l3.05 3.05v4.31l-3.05 3.05h-4.31l-3.05 -3.05v-4.31z" fill="#3d4640" fill-opacity="0.55" stroke="#c4cfc8" stroke-width="0.6"/><circle cx="372" cy="259.2" r="3.7" fill="#3fb577" fill-opacity="0.86"/><circle cx="372" cy="259.2" r="1.55" fill="#9cc8ae" fill-opacity="0.75"/><path d="M369.85 264.50h4.31l3.05 3.05v4.31l-3.05 3.05h-4.31l-3.05 -3.05v-4.31z" fill="#3d4640" fill-opacity="0.55" stroke="#c4cfc8" stroke-width="0.6"/><circle cx="372" cy="269.7" r="3.7" fill="#3fb577" fill-opacity="0.86"/><circle cx="372" cy="269.7" r="1.55" fill="#9cc8ae" fill-opacity="0.75"/><path d="M383.65 242.80h4.31l3.05 3.05v4.31l-3.05 3.05h-4.31l-3.05 -3.05v-4.31z" fill="#3d4640" fill-opacity="0.55" stroke="#c4cfc8" stroke-width="0.6"/><circle cx="385.8" cy="248" r="3.7" fill="#3fb577" fill-opacity="0.86"/><circle cx="385.8" cy="248" r="1.55" fill="#9cc8ae" fill-opacity="0.75"/><path d="M383.65 254.00h4.31l3.05 3.05v4.31l-3.05 3.05h-4.31l-3.05 -3.05v-4.31z" fill="#3d4640" fill-opacity="0.55" stroke="#c4cfc8" stroke-width="0.6"/><circle cx="385.8" cy="259.2" r="3.7" fill="#3fb577" fill-opacity="0.86"/><circle cx="385.8" cy="259.2" r="1.55" fill="#9cc8ae" fill-opacity="0.75"/><path d="M383.65 264.50h4.31l3.05 3.05v4.31l-3.05 3.05h-4.31l-3.05 -3.05v-4.31z" fill="#3d4640" fill-opacity="0.55" stroke="#c4cfc8" stroke-width="0.6"/><circle cx="385.8" cy="269.7" r="3.7" fill="#3fb577" fill-opacity="0.86"/><circle cx="385.8" cy="269.7" r="1.55" fill="#9cc8ae" fill-opacity="0.75"/><path d="M356.15 278.00h4.31l3.05 3.05v4.31l-3.05 3.05h-4.31l-3.05 -3.05v-4.31z" fill="#3d4640" fill-opacity="0.55" stroke="#c4cfc8" stroke-width="0.6"/><circle cx="358.3" cy="283.2" r="3.7" fill="#3fb577" fill-opacity="0.86"/><circle cx="358.3" cy="283.2" r="1.55" fill="#9cc8ae" fill-opacity="0.75"/><path d="M367.05 278.00h4.31l3.05 3.05v4.31l-3.05 3.05h-4.31l-3.05 -3.05v-4.31z" fill="#3d4640" fill-opacity="0.55" stroke="#c4cfc8" stroke-width="0.6"/><circle cx="369.2" cy="283.2" r="3.7" fill="#3fb577" fill-opacity="0.86"/><circle cx="369.2" cy="283.2" r="1.55" fill="#9cc8ae" fill-opacity="0.75"/><path d="M378.65 278.00h4.31l3.05 3.05v4.31l-3.05 3.05h-4.31l-3.05 -3.05v-4.31z" fill="#3d4640" fill-opacity="0.55" stroke="#c4cfc8" stroke-width="0.6"/><circle cx="380.8" cy="283.2" r="3.7" fill="#3fb577" fill-opacity="0.86"/><circle cx="380.8" cy="283.2" r="1.55" fill="#9cc8ae" fill-opacity="0.75"/><path d="M386.55 278.00h4.31l3.05 3.05v4.31l-3.05 3.05h-4.31l-3.05 -3.05v-4.31z" fill="#3d4640" fill-opacity="0.55" stroke="#c4cfc8" stroke-width="0.6"/><circle cx="388.7" cy="283.2" r="3.7" fill="#3fb577" fill-opacity="0.86"/><circle cx="388.7" cy="283.2" r="1.55" fill="#9cc8ae" fill-opacity="0.75"/></svg>
<svg width="800" height="450" viewBox="0 0 800 450"><g font-family="Liberation Sans,sans-serif" font-size="6.800" fill="#a2a2a2" fill-opacity="0.9" text-rendering="geometricPrecision"><text x="324" y="242.500" textLength="12.700">E$1</text><text x="297.500" y="253.300" textLength="12.200">E$4</text><text x="353" y="240" textLength="39.500">E$2E$5E$8</text><text x="389.700" y="261.600">10</text><text x="391.500" y="275.800">16</text></g></svg>
<div style="left:333.6px;top:418.5px;width:132.4px;height:11px;background:#f6f6f6;border-radius:1px"></div>
<div style="left:442px;top:418.5px;width:11px;height:11px;background:#0d92d8;"></div>
<svg width="800" height="450" viewBox="0 0 800 450"><circle cx="338.700" cy="424" r="2.300" fill="#2f87d0"/><rect x="338.400" y="423.500" width="0.7" height="1.900" fill="#fff"/><circle cx="338.750" cy="422.700" r="0.400" fill="#fff"/><path d="M345.800 424c1.600-2.300 4.400-2.300 6 0-1.600 2.300-4.400 2.300-6 0z" fill="#333"/><circle cx="348.800" cy="424" r="0.900" fill="#ddd"/><path d="M362 426.200c0-2.200-1-3-3-3" stroke="#555" stroke-width="0.8" fill="none"/><path d="M359.600 421.500l-2.300 1.700 2.300 1.700z" fill="#555"/><path d="M367.500 426.200c.4-1.900 1.400-2.700 3.200-2.800" stroke="#aaa" stroke-width="0.8" fill="none"/><path d="M370.300 421.700l2.200 1.700-2.200 1.700z" fill="#aaa"/><circle cx="380.5" cy="423.300" r="1.900" fill="none" stroke="#888" stroke-width="0.55"/><path d="M381.9 424.700l2 2" stroke="#888" stroke-width="0.7"/><circle cx="391.5" cy="423.300" r="1.900" fill="none" stroke="#888" stroke-width="0.55"/><path d="M392.9 424.700l2 2" stroke="#888" stroke-width="0.7"/><circle cx="402.5" cy="423.300" r="1.900" fill="none" stroke="#888" stroke-width="0.55"/><path d="M403.9 424.700l2 2" stroke="#888" stroke-width="0.7"/><circle cx="402.500" cy="423.300" r="1" fill="#3a8fd6"/><g stroke="#aaa" stroke-width="0.35"><path d="M411.5 421.500v5M411.500 421.5h5"/><path d="M412.75 421.500v5M411.500 422.75h5"/><path d="M414.0 421.500v5M411.500 424.0h5"/><path d="M415.25 421.500v5M411.500 425.25h5"/><path d="M416.5 421.500v5M411.500 426.5h5"/></g><path d="M422.500 424h5M425 421.500v5" stroke="#888" stroke-width="0.5"/><circle cx="436" cy="424" r="2.700" fill="#e02a2a"/><rect x="434.400" y="423.500" width="3.200" height="1" fill="#fff"/><path d="M446.500 421.500v4.600l1.100-1 .9 1.800.8-.4-.9-1.700h1.500z" fill="#fff"/><path d="M455.500 421v6M455.500 421.500h3.500v1.800h-3.500M455.500 424.300h5v1.800h-5" stroke="#888" stroke-width="0.5" fill="none"/><path d="M462.200 423.600h1.800l-.9 1.200z" fill="#333"/></svg>
<div style="left:632px;top:70.5px;width:168px;height:367px;background:#f0f0f0;"></div>
<svg width="800" height="450" viewBox="0 0 800 450"><path d="M635.200 73.800l-1 1.600 1 1.600" stroke="#999" stroke-width="0.5" fill="none"/><circle cx="640" cy="75.400" r="1.600" fill="#222"/><path d="M793.600 74.200l1.800 1.400-1.800 1.400zM795.900 74.200l1.800 1.400-1.800 1.400z" fill="#111"/></svg>
<div class="t" style="left:644.00px;top:74px;font-size:4.19px;color:#666;letter-spacing:-0.152px;">INSPECTOR</div>
<div class="t b" style="left:695.00px;top:86px;font-size:5.71px;color:#222;letter-spacing:-0.165px;">Nothing Selected</div>
<div style="left:634.3px;top:93px;width:10px;height:10px;background:#0d92d8;"></div>
<svg width="800" height="450" viewBox="0 0 800 450"><path d="M637.300 96.800h4l-2 2.500z" fill="#111"/></svg>
<div class="t b" style="left:645.00px;top:97px;font-size:5.99px;color:#222;letter-spacing:-0.171px;">Board Information</div>
<div class="t b" style="left:634.80px;top:108px;font-size:5.4px;color:#4a4a4a;letter-spacing:0.3px">Dimensions</div>
<div class="t" style="left:683.30px;top:109px;font-size:4.8px;color:#333;">Width:</div>
<div class="t" style="left:717.00px;top:109px;font-size:4.8px;color:#333;">100.1524 mm</div>
<div class="t" style="left:683.30px;top:118px;font-size:4.8px;color:#333;">Height:</div>
<div class="t" style="left:717.00px;top:118px;font-size:4.8px;color:#333;">50.1524 mm</div>
<div class="t b" style="left:634.80px;top:135px;font-size:5.4px;color:#4a4a4a;letter-spacing:0.3px">Elements</div>
<div class="t" style="left:683.30px;top:136px;font-size:4.8px;color:#333;">Total:</div>
<div class="t" style="left:717.00px;top:136px;font-size:4.8px;color:#333;">16</div>
<div class="t" style="left:683.30px;top:145px;font-size:4.8px;color:#333;">Top:</div>
<div class="t" style="left:717.00px;top:145px;font-size:4.8px;color:#333;">16</div>
<div class="t" style="left:683.30px;top:154px;font-size:4.8px;color:#333;">Bottom:</div>
<div class="t" style="left:717.00px;top:155px;font-size:4.8px;color:#333;">0</div>
<div class="t b" style="left:634.80px;top:172px;font-size:5.4px;color:#4a4a4a;letter-spacing:0.3px">Signals</div>
<div class="t" style="left:683.30px;top:173px;font-size:4.8px;color:#333;">Total:</div>
<div class="t" style="left:717.00px;top:173px;font-size:4.8px;color:#333;">7</div>
<div class="t" style="left:683.30px;top:182px;font-size:4.8px;color:#333;">Airwires:</div>
<div class="t" style="left:717.00px;top:182px;font-size:4.8px;color:#333;">0</div>
<div class="t b" style="left:634.80px;top:199px;font-size:5.4px;color:#4a4a4a;letter-spacing:0.3px">Primitives</div>
<div class="t" style="left:683.30px;top:200px;font-size:4.8px;color:#333;">Pads:</div>
<div class="t" style="left:717.00px;top:200px;font-size:4.8px;color:#333;">23</div>
<div class="t" style="left:683.30px;top:209px;font-size:4.8px;color:#333;">Vias:</div>
<div class="t" style="left:717.00px;top:209px;font-size:4.8px;color:#333;">0</div>
<div class="t" style="left:683.30px;top:218px;font-size:4.8px;color:#333;">Holes:</div>
<div class="t" style="left:717.00px;top:219px;font-size:4.8px;color:#333;">0</div>
<div class="t" style="left:683.30px;top:228px;font-size:4.8px;color:#333;">Copper Pours:</div>
<div class="t" style="left:717.00px;top:228px;font-size:4.8px;color:#333;">0</div>
<svg width="800" height="450" viewBox="0 0 800 450"><path d="M635.200 257.600l-1 1.600 1 1.600" stroke="#999" stroke-width="0.5" fill="none"/><circle cx="640" cy="259.200" r="1.600" fill="#222"/></svg>
<div class="t" style="left:644.00px;top:258px;font-size:4.19px;color:#666;letter-spacing:-0.140px;">SELECTION FILTER</div>
<div style="left:633.5px;top:263.3px;width:164.5px;height:0.5px;background:#c4c4c4;"></div>
<div class="t" style="left:634.60px;top:266px;font-size:5.09px;color:#222;letter-spacing:-0.156px;">Types</div>
<div style="left:633.5px;top:272px;width:164.5px;height:62.5px;background:#fff;"></div>
<div style="left:634px;top:272px;width:158.3px;height:62.5px;background:#0a94d8;"></div>
<div style="left:794.6px;top:272.5px;width:2px;height:27.5px;background:#9a9a9a;"></div>
<div class="t" style="left:644.80px;top:277px;font-size:4.8px;color:#fff;">Airwire</div>
<div class="t" style="left:644.80px;top:285px;font-size:4.8px;color:#fff;">Attribute</div>
<div class="t" style="left:644.80px;top:293px;font-size:4.8px;color:#fff;">Circle</div>
<div class="t" style="left:644.80px;top:302px;font-size:4.8px;color:#fff;">Device</div>
<div class="t" style="left:644.80px;top:310px;font-size:4.8px;color:#fff;">Dimension</div>
<div class="t" style="left:644.80px;top:318px;font-size:4.8px;color:#fff;">Frame</div>
<div class="t" style="left:644.80px;top:327px;font-size:4.8px;color:#fff;">Group</div>
<svg width="800" height="450" viewBox="0 0 800 450"><circle cx="638.700" cy="293.600" r="2.600" fill="#dfe3ea"/><rect x="636.200" y="300.300" width="5" height="1.100" fill="#b8a888"/><rect x="636.200" y="302.300" width="5" height="1.100" fill="#8aa0b0"/><path d="M636.200 308.700h5.200" stroke="#0a4a86" stroke-width="0.9"/><rect x="636.500" y="316.200" width="4.800" height="4.800" fill="#2a8fd0" stroke="#8aa4b8" stroke-width="0.7"/><rect x="636.200" y="324.400" width="5.400" height="5.400" fill="#dbe6f2"/><path d="M637.900 324.400v5.400M639.900 324.400v5.400" stroke="#3a8ad0" stroke-width="0.7"/><rect x="636.500" y="332.300" width="4.800" height="2.200" fill="#e8e8f0"/></svg>
<div class="t" style="left:634.60px;top:340px;font-size:4.94px;color:#222;letter-spacing:-0.138px;">Layers</div>
<div style="left:633.5px;top:344px;width:164.5px;height:31.5px;background:#fff;box-sizing:border-box;border:0.5px solid #c8c8c8"></div>
<div class="t" style="left:634.80px;top:347px;font-size:4.6px;color:#222;">&lt;All&gt;</div>
<div class="t" style="left:634.80px;top:354px;font-size:4.6px;color:#222;">&lt;Preset_Bottom&gt;</div>
<div class="t" style="left:634.80px;top:361px;font-size:4.6px;color:#222;">&lt;Preset_Standard&gt;</div>
<div class="t" style="left:634.80px;top:368px;font-size:4.6px;color:#222;">&lt;Preset_Top&gt;</div>
<div style="left:633.5px;top:380.3px;width:164.5px;height:56.3px;background:#fbfbfb;box-sizing:border-box;border:0.5px solid #c4c4c4"></div>
<div style="left:634px;top:380.8px;width:158.3px;height:44.5px;background:#0a94d8;"></div>
<div style="left:794.6px;top:381.3px;width:2px;height:11px;background:#9a9a9a;"></div>
<div style="left:635.8px;top:382.4px;width:6px;height:5.8px;background:#b4466c;"></div>
<div class="t" style="left:644.80px;top:385px;font-size:4.8px;color:#fff;">1 Top</div>
<div style="left:635.8px;top:390.73px;width:6px;height:5.8px;background:#1a78d0;"></div>
<div class="t" style="left:644.80px;top:393px;font-size:4.8px;color:#fff;">16 Bottom</div>
<div style="left:635.8px;top:399.06px;width:6px;height:5.8px;background:#3a9a82;"></div>
<div class="t" style="left:644.80px;top:402px;font-size:4.8px;color:#fff;">17 Pads</div>
<div style="left:635.8px;top:407.39px;width:6px;height:5.8px;background:#3a9c8c;"></div>
<div class="t" style="left:644.80px;top:410px;font-size:4.8px;color:#fff;">18 Vias</div>
<div style="left:635.8px;top:415.72px;width:6px;height:5.8px;background:#8a9cc6;"></div>
<div class="t" style="left:644.80px;top:418px;font-size:4.8px;color:#fff;">19 Unrouted</div>
<div style="left:779.5px;top:427.3px;width:20.5px;height:9.3px;background:#fdfdfd;box-sizing:border-box;border:0.5px solid #c0c0c0;border-radius:1px"></div>
<div class="t" style="left:783.30px;top:432px;font-size:4.87px;color:#222;letter-spacing:-0.144px;">Reset</div>
<svg width="800" height="450" viewBox="0 0 800 450"><rect x="4.200" y="36.300" width="11.700" height="9" fill="#f0a21e"/><rect x="4.200" y="42.600" width="4" height="2.700" fill="#8cb84a"/><rect x="8.500" y="41.700" width="7.400" height="3.600" fill="#eef6fb"/><rect x="9.300" y="42.400" width="2.600" height="2.900" fill="#7cc4ee"/><rect x="12.700" y="42.400" width="2.600" height="2.900" fill="#7cc4ee"/><path d="M24.800 36.100h7.400l3 6.600h-13.400z" fill="#6a6a6a"/><path d="M21.400 42.700h14.200l.4 1.800h-15z" fill="#4cb050"/><path d="M23.900 37.900h9.200M23 39.600h11M22.300 41.300h12.400M26.700 36.100l-1.500 6.600M28.500 36.100v6.600M30.300 36.100l1.500 6.600" stroke="#d0d0d0" stroke-width="0.4"/><g stroke="#555" stroke-width="0.65"><path d="M49.9 34.800v11.800M46.500 37.5h12.200"/><path d="M53.5 34.800v11.800M46.500 41.0h12.200"/><path d="M57.1 34.800v11.800M46.500 44.5h12.200"/></g><g fill="#f8f8f8" stroke="#666" stroke-width="0.6"><path d="M71.200 34.300h4.600l2.400 2.400v7.800h-7z"/><path d="M74.500 35.800h5l3.300 3.300v7.900h-8.300z"/></g><path d="M79.500 35.800v3.300h3.300z" fill="#333"/><rect x="88.800" y="36.300" width="9.400" height="10.700" rx="0.8" fill="#a8a8a8" stroke="#666" stroke-width="0.5"/><rect x="91.300" y="35" width="4.400" height="2.400" rx="0.6" fill="#e8e8e8" stroke="#555" stroke-width="0.5"/><path d="M94 39.500h5l2.200 2.200v5.800h-7.200z" fill="#f8f8f8" stroke="#666" stroke-width="0.55"/><path d="M99 39.500v2.200h2.200z" fill="#444"/><g fill="none" stroke="#666" stroke-width="0.6"><path d="M109.300 38.300h8.600l-.7 8.600h-7.200z" fill="#f6f6f6"/><path d="M108.300 37.200h10.600M111.300 37.200c0-3 4.600-3 4.600 0" /><path d="M111.700 40v5.300M113.600 40v5.300M115.500 40v5.300" stroke-width="0.8" stroke="#777"/></g><path d="M129.29999999999998 44.3l5.600-2.300 7 2-5.600 2.500z" fill="#1e88d0"/><path d="M129.29999999999998 42.25l5.600-2.300 7 2-5.600 2.500z" fill="#26a69a"/><path d="M129.29999999999998 40.199999999999996l5.600-2.300 7 2-5.600 2.500z" fill="#f2b632"/><path d="M129.29999999999998 38.15l5.600-2.300 7 2-5.600 2.500z" fill="#e53950"/><path d="M146.89999999999998 44.3l5.600-2.300 7 2-5.600 2.500z" fill="#e53950"/><path d="M146.89999999999998 42.25l5.600-2.300 7 2-5.600 2.500z" fill="#b0b0b0"/><path d="M146.89999999999998 40.199999999999996l5.600-2.300 7 2-5.600 2.500z" fill="#9a9a9a"/><path d="M146.89999999999998 38.15l5.600-2.300 7 2-5.600 2.500z" fill="#1e88d0"/><path d="M164.7 44.3l5.600-2.300 7 2-5.600 2.500z" fill="#8a8a8a"/><path d="M164.7 42.25l5.600-2.300 7 2-5.600 2.500z" fill="#b0b0b0"/><path d="M164.7 40.199999999999996l5.600-2.300 7 2-5.600 2.500z" fill="#9a9a9a"/><path d="M164.7 38.15l5.600-2.300 7 2-5.600 2.500z" fill="#e53950"/><path d="M190.500 36h10.500c1.300 0 1.800.6 1.800 1.800v7.500c0 .9-.5 1.300-1.300 1.300h-3.700l-2.300-3h-3.700c-.9 0-1.300-.5-1.300-1.300z" fill="#4bb266" stroke="#3b7fae" stroke-width="0.7"/><circle cx="190.5" cy="36" r="0.8" fill="#2f9be8"/><circle cx="198.5" cy="36" r="0.8" fill="#2f9be8"/><circle cx="198" cy="46.6" r="0.8" fill="#2f9be8"/><path d="M208 46.500l1.500-7 2-3 3 2.500 3 3.500 2-1 1-4v9z" fill="#4bb266"/><path d="M208 46.500l1.500-7 2-3" fill="none" stroke="#3fae60" stroke-width="0.5"/><path d="M211.500 36.500l3 2.500 3 3.500 2-1 1-6.800" fill="none" stroke="#58a6e0" stroke-width="0.6"/><circle cx="220.500" cy="34.700" r="0.700" fill="#58a6e0"/><circle cx="208" cy="46.500" r="0.600" fill="#58a6e0"/><g stroke="#333" stroke-width="0.9" fill="none"><path d="M233.800 40.800h10.600M239.100 35.500v10.600"/></g><g fill="#333"><path d="M239.100 34.200l2 2.500h-4zM239.100 47.400l2-2.500h-4zM232.500 40.800l2.500-2v4zM245.700 40.800l-2.500-2v4z"/></g><path d="M253 40.800A4.700 4.700 0 1 1 256.300 45.300" fill="none" stroke="#333" stroke-width="0.9"/><path d="M250.700 39.600h4.600l-2.300 3.300z" fill="#333"/><path d="M273.800 35.500v10.800h-4.600z" fill="#f4f4f4" stroke="#444" stroke-width="0.6"/><path d="M276 35.500v10.800h4.600z" fill="none" stroke="#7ab4e6" stroke-width="0.45"/><path d="M286.600 35v11.500" stroke="#555" stroke-width="0.6"/><rect x="287.200" y="36.500" width="5.600" height="3.500" fill="#dce9f5" stroke="#6aa5dc" stroke-width="0.5"/><rect x="287.200" y="40.800" width="11.500" height="4.200" fill="#4d9fe0"/><path d="M312.300 36h3.500l3.200 7.800" fill="none" stroke="#2f8ad8" stroke-width="1.1"/><circle cx="311.3" cy="36" r="1.3" fill="#f4f4f4" stroke="#444" stroke-width="0.55"/><circle cx="319.8" cy="45.2" r="1.3" fill="#f4f4f4" stroke="#444" stroke-width="0.55"/><g fill="none" stroke="#2f8ad8" stroke-width="1.1"><path d="M327.500 37.500h2.500l5 6.200h2.500M327.500 43.700h2.500l5-6.200h2.500"/></g><path d="M326.600 36v3.200M326.600 42.200v3.200" stroke="#e8305a" stroke-width="0.9"/><circle cx="338.6" cy="37.5" r="1.3" fill="#f4f4f4" stroke="#444" stroke-width="0.55"/><circle cx="338.6" cy="43.7" r="1.3" fill="#f4f4f4" stroke="#444" stroke-width="0.55"/><g fill="none" stroke="#2f8ad8" stroke-width="1"><path d="M344.500 38.600h5.500l3.500-2.400h2.500M344.500 40.600h11.500M344.500 42.600h5.500l3.500 2.700h2.500"/></g><circle cx="356.7" cy="36.2" r="1.3" fill="#f4f4f4" stroke="#444" stroke-width="0.55"/><circle cx="356.7" cy="40.6" r="1.3" fill="#f4f4f4" stroke="#444" stroke-width="0.55"/><circle cx="356.7" cy="45.3" r="1.3" fill="#f4f4f4" stroke="#444" stroke-width="0.55"/><path d="M371.500 37l8 7" stroke="#2f8ad8" stroke-width="0.9" stroke-dasharray="1.4 0.7"/><circle cx="370.8" cy="35.8" r="1.3" fill="#f4f4f4" stroke="#444" stroke-width="0.55"/><circle cx="380.2" cy="44.2" r="1.1" fill="#f4f4f4" stroke="#444" stroke-width="0.55"/><path d="M370.56 40.50 L367.83 43.86 L369.72 43.86 L367.62 47.01 L372.45 43.12 L370.45 43.12 L372.45 40.50z" fill="#333"/><ellipse cx="391.300" cy="45" rx="5.300" ry="1.900" fill="#1e88d8"/><rect x="388.800" y="37.500" width="5" height="7" fill="#6a6a6a"/><path d="M388.800 39.600h5M388.800 41.600h5M388.800 43.400h5" stroke="#9a9a9a" stroke-width="0.5"/><ellipse cx="391.300" cy="36.700" rx="5.300" ry="2.100" fill="#e62e4d"/><path d="M409.300 36.300l9 8.800M419.300 36.500l-6.500 5" stroke="#444" stroke-width="0.8"/><circle cx="408.5" cy="35.5" r="1.3" fill="#f4f4f4" stroke="#444" stroke-width="0.55"/><circle cx="419.8" cy="35.8" r="1.3" fill="#f4f4f4" stroke="#4a90d0" stroke-width="0.55"/><circle cx="419.3" cy="45.8" r="1.2" fill="#f4f4f4" stroke="#444" stroke-width="0.55"/><path d="M410.56 41.00 L407.83 44.36 L409.72 44.36 L407.62 47.51 L412.45 43.62 L410.45 43.62 L412.45 41.00z" fill="#333"/><path d="M425.800 35.500h7l5.500 10.500" fill="none" stroke="#2f8ad8" stroke-width="1"/><path d="M429.16 40.80 L426.43 44.16 L428.32 44.16 L426.22 47.31 L431.05 43.42 L429.06 43.42 L431.05 40.80z" fill="#333"/><g fill="none" stroke="#2f8ad8" stroke-width="1"><path d="M443.200 35.400h12.300c.9 0 1.200.5 1.200 1.200v9.600M443.200 37.700h9.800c.9 0 1.400.6 1.400 1.400v7M443.200 40h7.300c.9 0 1.500.6 1.500 1.500v4.600"/></g><path d="M446.70 41.20 L444.10 44.40 L445.90 44.40 L443.90 47.40 L448.50 43.70 L446.60 43.70 L448.50 41.20z" fill="#333"/><g fill="none" stroke="#2f8ad8" stroke-width="1"><path d="M461.200 35.400h12.800M461.200 37.700h9.500l2.500 1.500M461.200 40h6.500"/></g><path d="M473.200 38.500c1 1.300 1 3 0 4.500" fill="none" stroke="#e8305a" stroke-width="0.8"/><path d="M464.54 41.00 L462.07 44.04 L463.78 44.04 L461.88 46.89 L466.25 43.38 L464.44 43.38 L466.25 41.00z" fill="#333"/><path d="M470.54 41.00 L468.07 44.04 L469.78 44.04 L467.88 46.89 L472.25 43.38 L470.44 43.38 L472.25 41.00z" fill="#333"/><path d="M497.700 34.800l6.700 4.800-2.500 7.300h-8.400l-2.500-7.300z" fill="#5aaaf0" stroke="#2a7fd0" stroke-width="0.6"/><path d="M525.500 36h3.500l5 8.500" fill="none" stroke="#2f8ad8" stroke-width="1.1"/><circle cx="524.5" cy="35.8" r="1.3" fill="#f4f4f4" stroke="#444" stroke-width="0.55"/><circle cx="534.3" cy="45.3" r="1.3" fill="#f4f4f4" stroke="#444" stroke-width="0.55"/><path d="M528 38.600l3.400 3.400M531.400 38.600l-3.400 3.400" stroke="#e01030" stroke-width="1"/><path d="M548 47v-12.200h12.500" fill="none" stroke="#444" stroke-width="0.7"/><path d="M560.300 36l-7.500 6.500-.8 4" fill="none" stroke="#2f8ad8" stroke-width="0.9"/><path d="M565.800 34.500v12.500" stroke="#555" stroke-width="0.7"/><path d="M567.500 40.700h4" stroke="#333" stroke-width="0.7"/><path d="M570.800 38.800l2.500 1.900-2.500 1.900z" fill="#333"/><path d="M574 34.800l3.700 5.900-3.700 5.900" fill="none" stroke="#2f8ad8" stroke-width="0.8"/><g stroke="#ec4a78" stroke-width="0.7"><path d="M583.300 37.500h13.300M583.300 40.500h13.300M583.300 43.500h13.300"/></g><path d="M587.500 35l5 11.500" stroke="#333" stroke-width="0.7"/><path d="M605 35.300c5-1.500 9.500 2 8.500 7" fill="none" stroke="#e8486a" stroke-width="1"/><path d="M603.800 36.800l8.700 8" stroke="#2f8ad8" stroke-width="0.9"/><circle cx="603" cy="35.8" r="1.5" fill="#f4f4f4" stroke="#444" stroke-width="0.55"/><circle cx="613" cy="45.3" r="1.3" fill="#f4f4f4" stroke="#444" stroke-width="0.55"/><path d="M604.86 41.00 L602.13 44.36 L604.02 44.36 L601.92 47.51 L606.75 43.62 L604.75 43.62 L606.75 41.00z" fill="#333"/><path d="M629.500 45.600l6.300-6.300" stroke="#777" stroke-width="2.3" stroke-linecap="round"/><path d="M629.500 45.600l6.300-6.300" stroke="#c4c4c4" stroke-width="1" stroke-linecap="round"/><path d="M640.800 36.500a3.300 3.300 0 1 1-3.300-2.200l-1.300 2.200 1.800 1.700 2.200-1.200z" fill="#bdbdbd" stroke="#6a6a6a" stroke-width="0.6"/><rect x="657.500" y="33" width="15.600" height="15.800" fill="#0d92d8"/><rect x="659.500" y="35" width="9.500" height="9" fill="none" stroke="#5ab4ec" stroke-width="0.4" stroke-dasharray="0.8 0.6"/><path d="M667.300 40.300v7l1.700-1.600 1.300 2.600 1.100-.6-1.300-2.500h2.300z" fill="#fff"/></svg>
</div></body></html>
